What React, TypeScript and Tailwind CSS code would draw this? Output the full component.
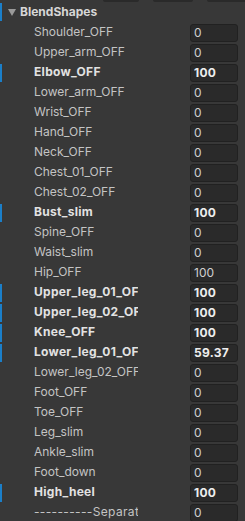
import React from 'react';

type Row = { name: string; value: string; bold?: boolean; sep?: boolean };

const rows: Row[] = [
  { name: 'Shoulder_OFF', value: '0' },
  { name: 'Upper_arm_OFF', value: '0' },
  { name: 'Elbow_OFF', value: '100', bold: true },
  { name: 'Lower_arm_OFF', value: '0' },
  { name: 'Wrist_OFF', value: '0' },
  { name: 'Hand_OFF', value: '0' },
  { name: 'Neck_OFF', value: '0' },
  { name: 'Chest_01_OFF', value: '0' },
  { name: 'Chest_02_OFF', value: '0' },
  { name: 'Bust_slim', value: '100', bold: true },
  { name: 'Spine_OFF', value: '0' },
  { name: 'Waist_slim', value: '0' },
  { name: 'Hip_OFF', value: '100' },
  { name: 'Upper_leg_01_OFF', value: '100', bold: true },
  { name: 'Upper_leg_02_OFF', value: '100', bold: true },
  { name: 'Knee_OFF', value: '100', bold: true },
  { name: 'Lower_leg_01_OFF', value: '59.37', bold: true },
  { name: 'Lower_leg_02_OFF', value: '0' },
  { name: 'Foot_OFF', value: '0' },
  { name: 'Toe_OFF', value: '0' },
  { name: 'Leg_slim', value: '0' },
  { name: 'Ankle_slim', value: '0' },
  { name: 'Foot_down', value: '0' },
  { name: 'High_heel', value: '100', bold: true },
  { name: '----------Separator', value: '0', sep: true },
];

function ShapeRow({ row }: { row: Row }) {
  const labelCls = row.bold
    ? 'font-bold text-[#e2e2e2] tracking-[0.3px]'
    : row.sep
    ? 'text-[#c4c4c4] tracking-[0.35px]'
    : 'text-[#c4c4c4]';
  return (
    <div className="flex h-[20px] items-center">
      <div className="w-[2px] h-[18px] mt-[1px]">
        {row.bold && <div className="w-full h-full bg-[#1b7fc9]" />}
      </div>
      <div
        className={`ml-[32px] w-[104px] overflow-hidden whitespace-nowrap text-[12px] leading-[20px] ${labelCls}`}
      >
        {row.name}
      </div>
      <div className="ml-[52px] w-[48px] h-[18px] mt-[1px] rounded-[3px] bg-[#2a2a2a] border border-[#212121] flex items-center px-[3px]">
        <span
          className={`text-[12px] leading-none ${
            row.bold ? 'font-bold text-[#eeeeee] tracking-[0.3px]' : 'text-[#d0d0d0]'
          }`}
        >
          {row.value}
        </span>
      </div>
    </div>
  );
}

export default function App() {
  return (
    <div
      className="w-[245px] h-[521px] overflow-hidden bg-[#383838]"
      style={{ fontFamily: 'Inter, "Noto Sans", sans-serif' }}
    >
      {/* bottoms of the fields above */}
      <div className="flex h-[2px]">
        <div className="ml-[103px] w-[36px] h-full bg-[#2a2a2a] rounded-b-[3px]" />
        <div className="ml-[14px] w-[40px] h-full bg-[#2a2a2a] rounded-b-[3px]" />
        <div className="ml-[14px] w-[38px] h-full bg-[#2a2a2a] rounded-bl-[3px]" />
      </div>

      {/* Header */}
      <div className="flex h-[20px] items-center">
        <div className="w-[2px] h-[18px] bg-[#1b7fc9]" />
        <svg width="8" height="7" viewBox="0 0 8 7" className="ml-[6px]">
          <path d="M0 0 L8 0 L4 7 Z" fill="#9a9a9a" />
        </svg>
        <span className="ml-[4px] text-[12px] font-bold text-[#d6d6d6]">BlendShapes</span>
      </div>

      <div className="flex flex-col">
        {rows.map((r) => (
          <ShapeRow key={r.name} row={r} />
        ))}
      </div>
    </div>
  );
}
